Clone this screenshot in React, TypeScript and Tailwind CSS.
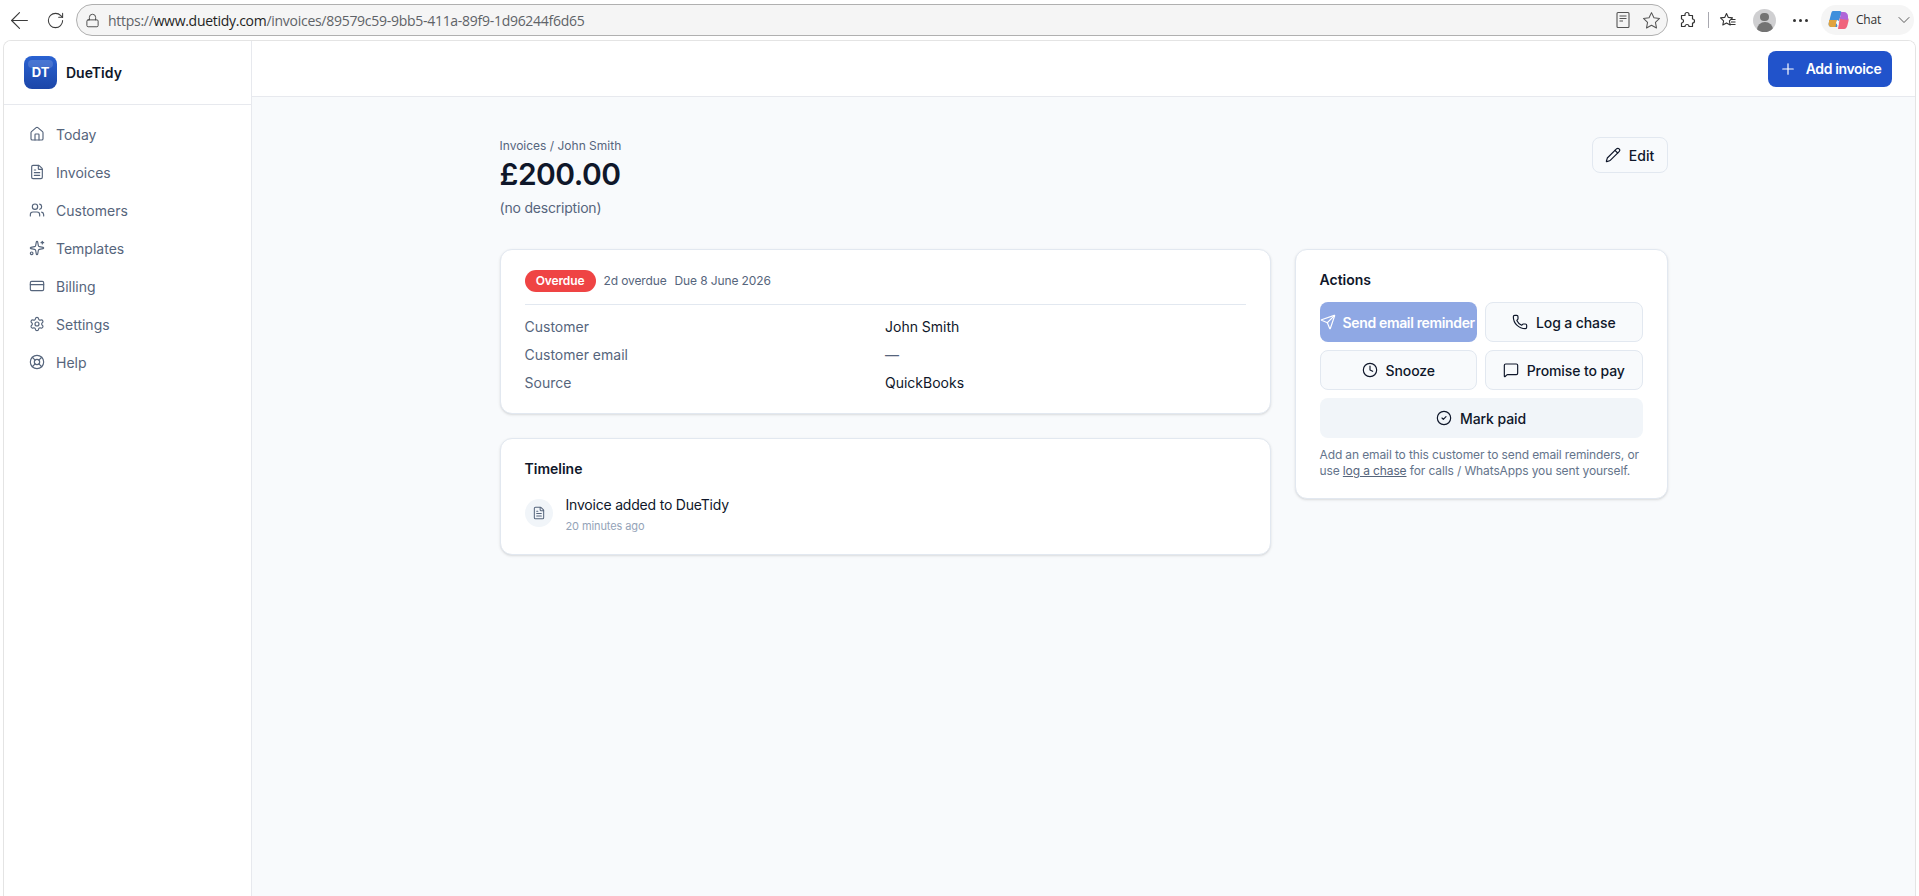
import {
  ArrowLeft,
  ChevronDown,
  CircleCheck,
  Clock,
  CreditCard,
  FileText,
  House,
  LifeBuoy,
  Lock,
  MessageSquare,
  Pencil,
  Phone,
  Plus,
  RotateCw,
  Send,
  Settings,
  Sparkles,
  Users,
} from 'lucide-react'

const navItems = [
  { name: 'Today', icon: House },
  { name: 'Invoices', icon: FileText },
  { name: 'Customers', icon: Users },
  { name: 'Templates', icon: Sparkles },
  { name: 'Billing', icon: CreditCard },
  { name: 'Settings', icon: Settings },
  { name: 'Help', icon: LifeBuoy },
]

const details = [
  { label: 'Customer', value: 'John Smith' },
  { label: 'Customer email', value: '—' },
  { label: 'Source', value: 'QuickBooks' },
]

function BrowserBar() {
  return (
    <div className="h-10 flex items-center bg-white text-[#3b3b3b] shrink-0 font-['Open_Sans',sans-serif]">
      <ArrowLeft size={27} strokeWidth={1} className="ml-[6px] shrink-0" />
      <RotateCw size={19} strokeWidth={1.3} className="ml-[13px] shrink-0" />
      <div className="ml-[11px] h-[32px] w-[1592px] shrink-0 rounded-full border border-[#b0b0b0] bg-[#f5f5f5] flex items-center">
        <Lock size={15} strokeWidth={1.4} className="ml-[8px]" />
        <div className="ml-[8px] text-[14px] tracking-[-0.28px] text-[#5f6368] whitespace-nowrap">
          https://<span className="text-[#1f1f1f]">www.duetidy.com</span>/invoices/89579c59-9bb5-411a-89f9-1d96244f6d65
        </div>
        <div className="ml-auto mr-[5px] flex items-center gap-[10px]">
          <svg width="16" height="18" viewBox="0 0 16 18" fill="none" stroke="#555" strokeWidth="1.1">
            <rect x="2" y="1.500" width="12" height="15" rx="1" />
            <path d="M4.500 5h7M4.500 7.500h7M4.500 10h3.500" />
          </svg>
          <svg width="21" height="21" viewBox="0 0 24 24" fill="none" stroke="#555" strokeWidth="1.200" strokeLinejoin="round">
            <path d="M12 3l2.800 5.900 6.400.8-4.700 4.400 1.200 6.400L12 17.400l-5.700 3.100 1.200-6.400-4.700-4.400 6.400-.8z" />
          </svg>
        </div>
      </div>
      <svg className="ml-[10px] shrink-0" width="18" height="18" viewBox="0 0 18 18" fill="none" stroke="#333" strokeWidth="1.200" strokeLinejoin="round">
        <path d="M7 3.500a2 2 0 0 1 4 0V4.500h3.500V8a2 2 0 0 1 0 4v3.500H11a2 2 0 0 0-4 0H3.500V12a2 2 0 0 0 0-4V4.500H7z" />
      </svg>
      <div className="ml-[12px] w-px h-[16px] bg-[#a8a8b0] shrink-0" />
      <svg className="ml-[10px] shrink-0" width="18" height="18" viewBox="0 0 18 18" fill="none" stroke="#333" strokeWidth="1.100" strokeLinejoin="round">
        <path d="M7.500 2.500l1.800 3.900 4.200.5-3.100 2.900.8 4.200-3.700-2.100-3.700 2.100.8-4.200L1.500 6.900l4.200-.5z" />
        <path d="M12 8.500h4.500M12 11h4.500M11 13.500h5.500" />
      </svg>
      <div className="ml-[16px] w-[23px] h-[23px] rounded-full bg-[#cfcfd1] overflow-hidden flex flex-col items-center shrink-0">
        <div className="mt-[4px] w-[9px] h-[9px] rounded-full bg-[#737373]" />
        <div className="mt-[1px] w-[16px] h-[10px] rounded-t-full bg-[#737373]" />
      </div>
      <div className="ml-[17px] flex gap-[3px] shrink-0">
        <span className="w-[3px] h-[3px] rounded-full bg-[#333]" />
        <span className="w-[3px] h-[3px] rounded-full bg-[#333]" />
        <span className="w-[3px] h-[3px] rounded-full bg-[#333]" />
      </div>
      <div className="ml-[13px] h-[30px] w-[93px] shrink-0 rounded-full bg-[#f5f5f5] flex items-center">
        <svg className="ml-[6px] shrink-0" width="22" height="22" viewBox="0 0 22 22">
          <path d="M6 2h7c1 0 2 1 1.500 2L10 18H5c-3 0-4-2-3-5l2-8c.5-2 1-3 2-3z" fill="#3f8fdc" />
          <path d="M2 11h8l-1.500 7H5c-3 0-4-2-3-5z" fill="#e0a33f" />
          <path d="M11 20h6c2 0 3-2 3.500-4l1-4c.5-2-.5-4-2.500-4h-6z" fill="#f0637c" />
          <path d="M14 3h3c2 0 4 2 4 4v4l-8-1z" fill="#b066d8" />
          <path d="M9 14l1-3 2 1-1 5z" fill="#ffffff" />
        </svg>
        <span className="ml-[7px] text-[12px] tracking-[-0.2px] text-[#333]">Chat</span>
        <ChevronDown size={20} strokeWidth={1} className="ml-[13px] shrink-0" />
      </div>
    </div>
  )
}

function Sidebar() {
  return (
    <aside className="w-[248px] shrink-0 border-r border-[#e7e9ee] bg-white">
      <div className="h-[64px] border-b border-[#e7e9ee] flex items-center pl-[20px]">
        <div className="relative w-[33px] h-[33px] rounded-[8px] bg-gradient-to-b from-[#2a62d2] to-[#1c46a8] flex items-center justify-center text-[13px] font-bold text-white">
          <div className="absolute left-[4px] right-[4px] top-[4px] h-[8px] rounded-[4px] bg-white/15" />
          DT
        </div>
        <span className="ml-[9px] text-[14px] font-semibold text-[#0f172a]">DueTidy</span>
      </div>
      <nav className="pt-[10px] pl-[25px]">
        {navItems.map((item) => (
          <div key={item.name} className="h-[38px] flex items-center text-[14px] text-[#56657c]">
            <item.icon size={16} strokeWidth={1.75} />
            <span className="ml-[11px]">{item.name}</span>
          </div>
        ))}
      </nav>
    </aside>
  )
}

export default function App() {
  return (
    <div className="h-[896px] w-full overflow-hidden flex flex-col bg-white font-['Inter',sans-serif]">
      <BrowserBar />
      <div className="flex-1 min-h-0 ml-[3px] mr-[3px] flex rounded-t-[8px] border-l border-t border-r border-[#e4e4e4] overflow-hidden">
        <Sidebar />
        <div className="flex-1 flex flex-col bg-[#f8fafc]">
          <header className="h-[56px] shrink-0 bg-white border-b border-[#e7e9ee] flex items-center justify-end pr-[23px]">
            <button className="h-[36px] w-[124px] rounded-[8px] bg-[#2153cb] text-white text-[14px] font-semibold tracking-[-0.35px] flex items-center justify-center gap-[9px]">
              <Plus size={18} strokeWidth={1.6} />
              Add invoice
            </button>
          </header>
          <main className="w-[1168px] mx-auto pt-[40px]">
            <div className="flex items-start justify-between">
              <div>
                <div className="text-[12px] leading-[16px] pt-[1px] text-[#56657c]">Invoices / John Smith</div>
                <h1 className="text-[30px] leading-[36px] font-semibold tracking-[-0.5px] text-[#0f172a] mt-[2px]">£200.00</h1>
                <p className="text-[14px] leading-[20px] tracking-[-0.2px] text-[#56657c] mt-[6px]">(no description)</p>
              </div>
              <button className="h-[36px] w-[76px] rounded-[8px] border border-[#e2e8f0] bg-[#f8fafc] text-[14px] font-medium text-[#0f172a] flex items-center justify-center gap-[8px]">
                <Pencil size={16} strokeWidth={1.75} />
                Edit
              </button>
            </div>

            <div className="grid grid-cols-[1fr_373px] gap-[24px] mt-[31px]">
              <div className="flex flex-col gap-[24px]">
                <section className="h-[165px] rounded-[12px] border border-[#e2e8f0] bg-white shadow-sm px-[24px] pt-[20px]">
                  <div className="flex items-center h-[22px] gap-[8px] text-[12px] tracking-[-0.12px] text-[#56657c]">
                    <span className="h-[22px] w-[71px] rounded-full bg-[#ef4444] text-white font-semibold flex items-center justify-center">Overdue</span>
                    <span>2d overdue</span>
                    <span>Due 8 June 2026</span>
                  </div>
                  <div className="mt-[12px] border-t border-[#e2e8f0] pt-[7px] text-[14px]">
                    {details.map((row) => (
                      <div key={row.label} className="grid grid-cols-2 h-[28px] items-center">
                        <span className="text-[#56657c]">{row.label}</span>
                        <span className={row.value === '—' ? 'text-[#56657c]' : 'text-[#0f172a]'}>{row.value}</span>
                      </div>
                    ))}
                  </div>
                </section>

                <section className="h-[117px] rounded-[12px] border border-[#e2e8f0] bg-white shadow-sm px-[24px] pt-[20px]">
                  <h2 className="text-[14px] leading-[20px] font-semibold text-[#0f172a]">Timeline</h2>
                  <div className="flex items-start gap-[13px] mt-[20px]">
                    <div className="w-[28px] h-[28px] rounded-full bg-[#f1f5f9] flex items-center justify-center text-[#56657c]">
                      <FileText size={14} strokeWidth={1.75} />
                    </div>
                    <div className="-mt-[4px]">
                      <div className="text-[14px] leading-[20px] tracking-[-0.2px] text-[#0f172a]">Invoice added to DueTidy</div>
                      <div className="text-[11px] leading-[16px] tracking-[-0.1px] mt-[3px] text-[#94a3b8]">20 minutes ago</div>
                    </div>
                  </div>
                </section>
              </div>

              <section className="h-[250px] rounded-[12px] border border-[#e2e8f0] bg-white shadow-sm px-[24px] pt-[20px]">
                <h2 className="text-[14px] leading-[20px] font-semibold text-[#0f172a]">Actions</h2>
                <div className="grid grid-cols-2 gap-[8px] mt-[12px] text-[14px] font-medium tracking-[-0.1px] text-[#0f172a]">
                  <button className="h-[40px] rounded-[8px] bg-[#2153cb] text-white opacity-50 flex items-center gap-[7px] overflow-hidden whitespace-nowrap font-semibold tracking-[-0.35px]">
                    <Send size={16} strokeWidth={1.75} className="shrink-0" />
                    Send email reminder
                  </button>
                  <button className="h-[40px] rounded-[8px] border border-[#e2e8f0] bg-[#f8fafc] flex items-center justify-center gap-[8px]">
                    <Phone size={16} strokeWidth={1.75} />
                    Log a chase
                  </button>
                  <button className="h-[40px] rounded-[8px] border border-[#e2e8f0] bg-[#f8fafc] flex items-center justify-center gap-[8px]">
                    <Clock size={16} strokeWidth={1.75} />
                    Snooze
                  </button>
                  <button className="h-[40px] rounded-[8px] border border-[#e2e8f0] bg-[#f8fafc] flex items-center justify-center gap-[8px]">
                    <MessageSquare size={16} strokeWidth={1.75} />
                    Promise to pay
                  </button>
                  <button className="col-span-2 h-[40px] rounded-[8px] bg-[#f1f5f9] flex items-center justify-center gap-[8px]">
                    <CircleCheck size={16} strokeWidth={1.75} />
                    Mark paid
                  </button>
                </div>
                <p className="mt-[9px] text-[12px] leading-[16px] tracking-[-0.12px] text-[#64748b]">
                  Add an email to this customer to send email reminders, or use <span className="underline text-[#56657c]">log a chase</span> for calls / WhatsApps you sent yourself.
                </p>
              </section>
            </div>
          </main>
        </div>
      </div>
    </div>
  )
}
